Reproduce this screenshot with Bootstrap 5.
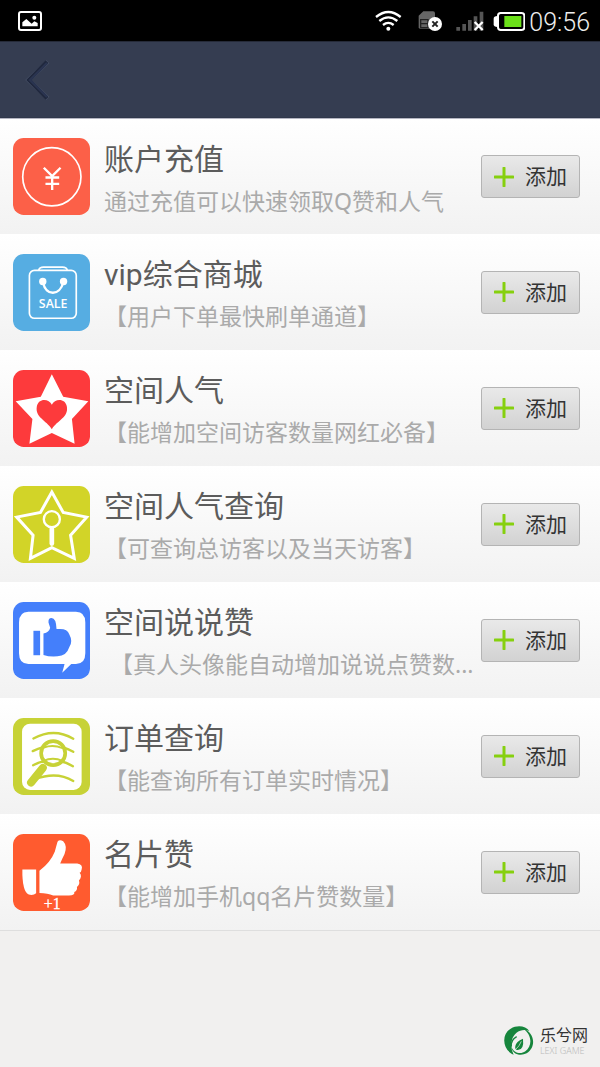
<!DOCTYPE html>
<html lang="zh-CN">
<head>
<meta charset="utf-8">
<meta name="viewport" content="width=device-width, initial-scale=1">
<title>添加服务</title>
<link href="https://cdn.jsdelivr.net/npm/bootstrap@5.3.0/dist/css/bootstrap.min.css" rel="stylesheet">
<style>
  body { font-family: "Noto Sans", "Noto Sans CJK SC", sans-serif; background: #f1f0ef; }
  .status-bar { background: #000; height: 41px; padding: 0 10px 0 18px; }
  .clock { font: 300 25px/38px Roboto, sans-serif; color: #eee; padding-top: 4px; }
  .title-bar { background: #353d51; height: 77px; padding: 0 24px; border-top: 1px solid #252a38; border-bottom: 1px solid #30384b; }
  .service { height: 116px; padding: 0 20px 0 13px; background: linear-gradient(#fff, #f2f2f2); }
  .service:first-child { border-top: 1px solid #b5b6c2; }
  .service-list { border-bottom: 1px solid #dedede; }
  .service-icon { width: 77px; height: 77px; margin-right: 14px; }
  .service-text { min-width: 0; margin-right: 5px; padding-top: 6px; }
  .service-name { font-family: Roboto, "Noto Sans CJK SC", sans-serif; font-size: 30px; line-height: 42px; color: #5c5c5c; font-weight: 400; }
  .service-note { font-size: 23px; line-height: 40px; color: #aaa; }
  .add-btn { width: 99px; height: 43px; padding: 0 0 0 12px; border: 1px solid #b4b4b4; border-radius: 3px;
    background: linear-gradient(#e9e9e9, #d2d2d2); color: #333; font-size: 21px; line-height: 41px; gap: 11px; }
  .add-btn:hover { color: #333; border-color: #999; }
  .brand-mark { padding: 0 12px 11px 0; gap: 6px; }
  .brand-name { font-size: 16px; line-height: 21px; color: #333; }
  .brand-sub { font-size: 9px; line-height: 10px; color: #bbb; font-weight: 300; }
</style>
</head>
<body class="d-flex flex-column min-vh-100">
<div class="status-bar d-flex align-items-center">
  <svg class="me-auto" width="24" height="20" viewBox="0 0 72 60" aria-hidden="true">
    <rect x="3" y="3" width="66" height="54" rx="6" fill="none" stroke="#fff" stroke-width="6"/>
    <path d="M13 46V34l12-10 16 14 8-7 10 5v10z" fill="#fff"/><circle cx="49" cy="20" r="6" fill="#fff"/>
  </svg>
  <svg width="150" height="24" viewBox="0 0 450 72" aria-hidden="true">
    <g transform="translate(-44 -30)">
      <g fill="none" stroke="#fff" stroke-width="7">
        <path d="M47 54Q84 24 121 54M57 66Q84 44 111 66M68 78Q84 65 100 78"/>
      </g>
      <circle cx="84" cy="89" r="6" fill="#fff"/>
      <path d="M175 50l14-13h29q6 0 6 6v46h-45q-4 0-4-4z" fill="#666"/>
      <path d="M181 62h22v24h-22zM181 74h22" fill="none" stroke="#222" stroke-width="4"/>
      <circle cx="224" cy="75" r="21" fill="#fff"/>
      <path d="M216 67l16 16m0-16l-16 16" stroke="#222" stroke-width="6"/>
      <path d="M288 84h11v11h-11zM306 75h11v20h-11zM323 63h11v32h-11zM340 52h11v43h-11zM358 38h11v57h-11z" fill="#555"/>
      <path d="M343 69l24 24m0-24l-24 24" stroke="#fff" stroke-width="7"/>
      <rect x="413" y="42" width="79" height="51" rx="8" fill="none" stroke="#fff" stroke-width="6"/>
      <path d="M411 51q-11 0-11 8v17q0 8 11 8z" fill="#fff"/><rect x="432" y="51" width="51" height="33" fill="#6be019"/>
    </g>
  </svg>
  <time class="clock ms-1">09:56</time>
</div>

<header class="title-bar d-flex align-items-center">
  <a href="#" aria-label="返回" class="d-flex"><svg width="28" height="40" viewBox="0 0 84 120">
    <path d="M71 5L14 60l57 55" fill="none" stroke="#49536a" stroke-width="14"/>
    <path d="M69 5L15 60l54 55" fill="none" stroke="#20283d" stroke-width="12"/>
    <path d="M69 9L18 60l51 51" fill="none" stroke="#2a3450" stroke-width="7"/>
  </svg></a>
</header>

<main>
<ul class="service-list list-unstyled mb-0">
  <li class="service d-flex align-items-center">
    <svg class="service-icon flex-shrink-0" viewBox="40 60 230 230" aria-hidden="true">
      <rect x="40" y="60" width="230" height="230" rx="32" fill="#fc6048"/>
      <circle cx="156" cy="176" r="87" fill="none" stroke="#fff" stroke-width="5"/>
      <path d="M132 149l25 25 25-25M157 174v41M137 178h41M137 197h41" fill="none" stroke="#fff" stroke-width="7"/>
    </svg>
    <div class="service-text flex-grow-1">
      <h2 class="service-name text-truncate mb-0">账户充值</h2>
      <p class="service-note text-truncate mb-0">通过充值可以快速领取Q赞和人气</p>
    </div>
    <button type="button" class="btn add-btn d-flex align-items-center flex-shrink-0"><svg width="20" height="20" viewBox="0 0 20 20" aria-hidden="true"><path d="M10 1v18M1 10h18" stroke="#86d00f" stroke-width="3" stroke-linecap="round"/></svg>添加</button>
  </li>
  <li class="service d-flex align-items-center">
    <svg class="service-icon flex-shrink-0" viewBox="40 60 230 230" aria-hidden="true">
      <rect x="40" y="60" width="230" height="230" rx="32" fill="#56ade2"/>
      <g fill="none" stroke="#fff" stroke-width="5">
        <rect x="89" y="109" width="140" height="143" rx="15"/>
        <path d="M117 108q2-9 14-9h57q12 0 14 9"/>
        <path d="M130 146c8 40 50 40 60-1" stroke-width="7"/>
      </g>
      <circle cx="129" cy="142" r="11" fill="#fff"/><circle cx="191" cy="142" r="11" fill="#fff"/>
      <text x="160" y="221" text-anchor="middle" font-family="Open Sans, sans-serif" font-size="37" font-weight="600" fill="#fff">SALE</text>
    </svg>
    <div class="service-text flex-grow-1">
      <h2 class="service-name text-truncate mb-0">vip综合商城</h2>
      <p class="service-note text-truncate mb-0">【用户下单最快刷单通道】</p>
    </div>
    <button type="button" class="btn add-btn d-flex align-items-center flex-shrink-0"><svg width="20" height="20" viewBox="0 0 20 20" aria-hidden="true"><path d="M10 1v18M1 10h18" stroke="#86d00f" stroke-width="3" stroke-linecap="round"/></svg>添加</button>
  </li>
  <li class="service d-flex align-items-center">
    <svg class="service-icon flex-shrink-0" viewBox="40 30 230 230" aria-hidden="true">
      <rect x="40" y="30" width="230" height="230" rx="32" fill="#fd3a3c"/>
      <path d="M156 43l34 67 75 13-49 53 8 74-68-32-67 32 9-74-50-53 75-13z" fill="#fff"/>
      <path d="M156 134c8-18 40-22 45 6 5 32-28 40-45 67-17-27-50-35-45-67 5-28 37-24 45-6z" fill="#fd3a3c"/>
    </svg>
    <div class="service-text flex-grow-1">
      <h2 class="service-name text-truncate mb-0">空间人气</h2>
      <p class="service-note text-truncate mb-0">【能增加空间访客数量网红必备】</p>
    </div>
    <button type="button" class="btn add-btn d-flex align-items-center flex-shrink-0"><svg width="20" height="20" viewBox="0 0 20 20" aria-hidden="true"><path d="M10 1v18M1 10h18" stroke="#86d00f" stroke-width="3" stroke-linecap="round"/></svg>添加</button>
  </li>
  <li class="service d-flex align-items-center">
    <svg class="service-icon flex-shrink-0" viewBox="40 30 230 230" aria-hidden="true">
      <rect x="40" y="30" width="230" height="230" rx="32" fill="#d2d428"/>
      <path d="M156 48l34 61 70 14-48 54 11 69-67-32-64 32 8-69-49-54 71-14z" fill="none" stroke="#fff" stroke-width="9"/>
      <circle cx="156" cy="129" r="24" fill="none" stroke="#fff" stroke-width="7"/>
      <path d="M156 158v44" stroke="#fff" stroke-width="14" stroke-linecap="round"/>
    </svg>
    <div class="service-text flex-grow-1">
      <h2 class="service-name text-truncate mb-0">空间人气查询</h2>
      <p class="service-note text-truncate mb-0">【可查询总访客以及当天访客】</p>
    </div>
    <button type="button" class="btn add-btn d-flex align-items-center flex-shrink-0"><svg width="20" height="20" viewBox="0 0 20 20" aria-hidden="true"><path d="M10 1v18M1 10h18" stroke="#86d00f" stroke-width="3" stroke-linecap="round"/></svg>添加</button>
  </li>
  <li class="service d-flex align-items-center">
    <svg class="service-icon flex-shrink-0" viewBox="40 30 230 230" aria-hidden="true">
      <rect x="40" y="30" width="230" height="230" rx="32" fill="#447ffb"/>
      <path d="M86 59h142q28 0 28 32v92q0 32-28 32h-14l-27 26 7-26H86q-28 0-28-32V91q0-32 28-32z" fill="#fff"/>
      <path d="M101 116h20v73h-20z" fill="#447ffb"/>
      <path d="M131 124q17-3 20-17l-5-16q-1-13 9-13 14 0 15 33 32-4 38 15 12 22 0 39-8 26-35 27-24 2-42-4z" fill="#447ffb"/>
    </svg>
    <div class="service-text flex-grow-1">
      <h2 class="service-name text-truncate mb-0">空间说说赞</h2>
      <p class="service-note text-truncate mb-0">&nbsp;【真人头像能自动增加说说点赞数...</p>
    </div>
    <button type="button" class="btn add-btn d-flex align-items-center flex-shrink-0"><svg width="20" height="20" viewBox="0 0 20 20" aria-hidden="true"><path d="M10 1v18M1 10h18" stroke="#86d00f" stroke-width="3" stroke-linecap="round"/></svg>添加</button>
  </li>
  <li class="service d-flex align-items-center">
    <svg class="service-icon flex-shrink-0" viewBox="40 30 230 230" aria-hidden="true">
      <rect x="40" y="30" width="230" height="230" rx="32" fill="#c7d236"/>
      <rect x="67" y="47" width="178" height="198" rx="24" fill="#fff"/>
      <g fill="none" stroke="#c7d236" stroke-width="7" stroke-linecap="round">
        <path d="M101 91q62-33 119 1M99 129q65-32 121 2M100 171q62-31 119 3M105 213q65-25 115 5"/>
        <circle cx="160" cy="135" r="36" fill="#fff" stroke-width="11"/>
        <path d="M132 118q28-10 56 2M131 158q28-12 57 0" stroke-width="6"/>
        <path d="M129 179l-35 44" stroke-width="24"/>
      </g>
    </svg>
    <div class="service-text flex-grow-1">
      <h2 class="service-name text-truncate mb-0">订单查询</h2>
      <p class="service-note text-truncate mb-0">【能查询所有订单实时情况】</p>
    </div>
    <button type="button" class="btn add-btn d-flex align-items-center flex-shrink-0"><svg width="20" height="20" viewBox="0 0 20 20" aria-hidden="true"><path d="M10 1v18M1 10h18" stroke="#86d00f" stroke-width="3" stroke-linecap="round"/></svg>添加</button>
  </li>
  <li class="service d-flex align-items-center">
    <svg class="service-icon flex-shrink-0" viewBox="40 41 230 230" aria-hidden="true">
      <rect x="40" y="41" width="230" height="230" rx="32" fill="#ff5b2f"/>
      <path d="M68 147h41v71q-8 7-22 4-20-10-19-75z" fill="#fff"/>
      <path d="M119 151q34-27 46-58 4-15 8-29 6-8 17-1 13 14 4 38-9 18-13 28h51q18 3 13 18-1 8-6 10 9 11-2 23 4 12-6 19 2 11-8 15 3 10-16 11h-47q-16-8-41-8z" fill="#fff"/>
      <text x="157" y="266" text-anchor="middle" font-family="Liberation Serif, serif" font-size="47" fill="#fff" stroke="#fff">+1</text>
    </svg>
    <div class="service-text flex-grow-1">
      <h2 class="service-name text-truncate mb-0">名片赞</h2>
      <p class="service-note text-truncate mb-0">【能增加手机qq名片赞数量】</p>
    </div>
    <button type="button" class="btn add-btn d-flex align-items-center flex-shrink-0"><svg width="20" height="20" viewBox="0 0 20 20" aria-hidden="true"><path d="M10 1v18M1 10h18" stroke="#86d00f" stroke-width="3" stroke-linecap="round"/></svg>添加</button>
  </li>
</ul>
</main>

<footer class="brand-mark d-flex justify-content-end align-items-center mt-auto">
  <svg width="30" height="30" viewBox="0 0 90 90" aria-hidden="true">
    <path d="M29 86C-6 72-8 24 20 8 40-4 66 0 76 15 52 6 30 20 24 42q-6 24 5 44z" fill="#16853c"/>
    <path d="M58 8C92 18 98 64 68 82 48 92 24 84 22 62c8 20 28 24 42 14C86 60 84 26 58 8z" fill="#16853c"/>
    <path d="M22 62Q20 42 38 32" fill="none" stroke="#16853c" stroke-width="4"/>
    <path d="M57 38q4 36-18 34-7-1-5-12 2-14 23-22z" fill="#16853c"/>
    <path d="M52 46q-6 15-17 24" fill="none" stroke="#f1f0ef" stroke-width="2"/>
  </svg>
  <div>
    <div class="brand-name">乐兮网</div>
    <div class="brand-sub">LEXI GAME</div>
  </div>
</footer>
<script src="https://cdn.jsdelivr.net/npm/bootstrap@5.3.0/dist/js/bootstrap.bundle.min.js"></script>
</body>
</html>
